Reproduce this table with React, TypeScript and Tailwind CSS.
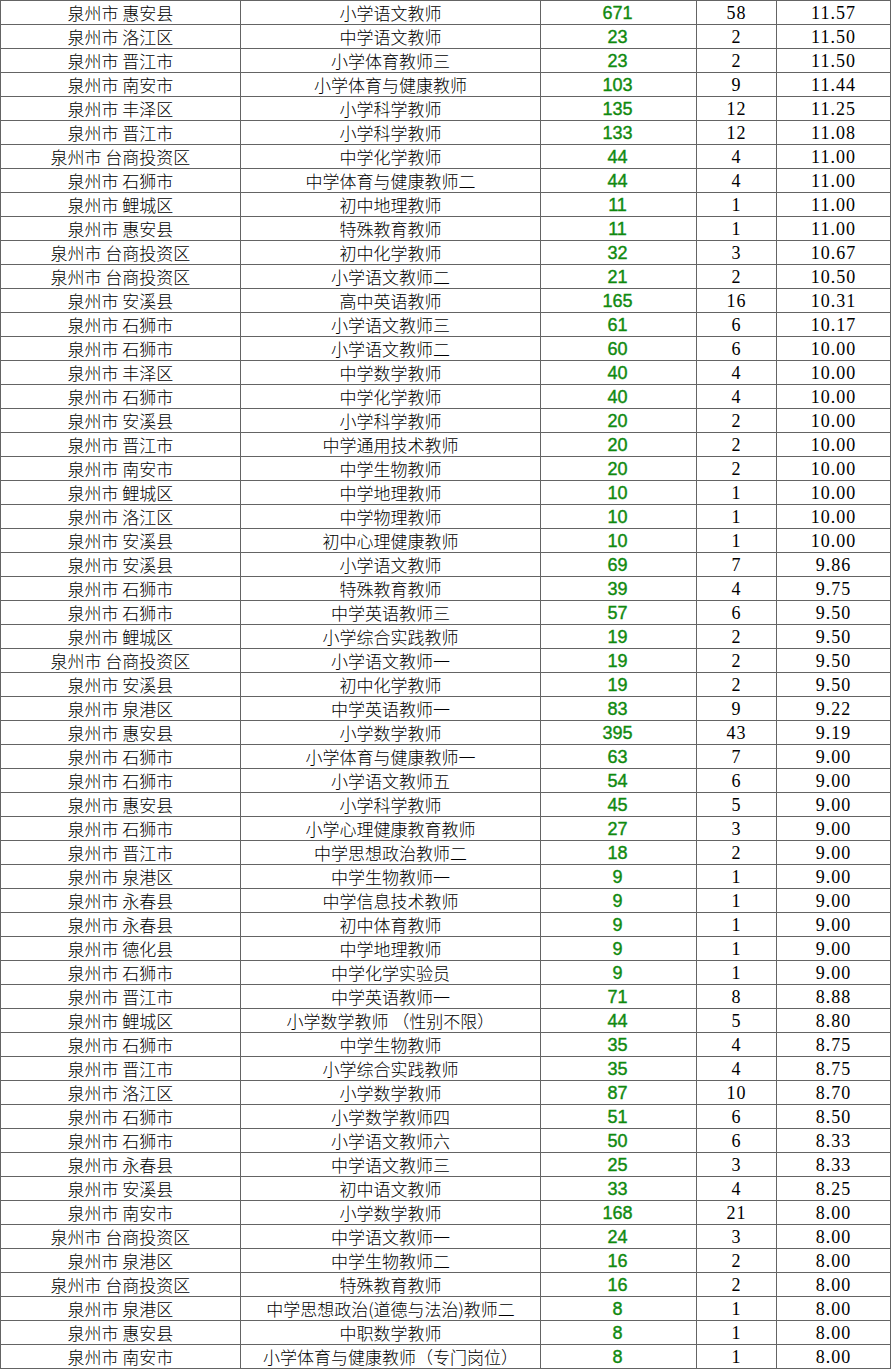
import * as React from "react"

type Row = [string, string, number, number, string]

const rows: Row[] = [
  ["泉州市 惠安县", "小学语文教师", 671, 58, "11.57"],
  ["泉州市 洛江区", "中学语文教师", 23, 2, "11.50"],
  ["泉州市 晋江市", "小学体育教师三", 23, 2, "11.50"],
  ["泉州市 南安市", "小学体育与健康教师", 103, 9, "11.44"],
  ["泉州市 丰泽区", "小学科学教师", 135, 12, "11.25"],
  ["泉州市 晋江市", "小学科学教师", 133, 12, "11.08"],
  ["泉州市 台商投资区", "中学化学教师", 44, 4, "11.00"],
  ["泉州市 石狮市", "中学体育与健康教师二", 44, 4, "11.00"],
  ["泉州市 鲤城区", "初中地理教师", 11, 1, "11.00"],
  ["泉州市 惠安县", "特殊教育教师", 11, 1, "11.00"],
  ["泉州市 台商投资区", "初中化学教师", 32, 3, "10.67"],
  ["泉州市 台商投资区", "小学语文教师二", 21, 2, "10.50"],
  ["泉州市 安溪县", "高中英语教师", 165, 16, "10.31"],
  ["泉州市 石狮市", "小学语文教师三", 61, 6, "10.17"],
  ["泉州市 石狮市", "小学语文教师二", 60, 6, "10.00"],
  ["泉州市 丰泽区", "中学数学教师", 40, 4, "10.00"],
  ["泉州市 石狮市", "中学化学教师", 40, 4, "10.00"],
  ["泉州市 安溪县", "小学科学教师", 20, 2, "10.00"],
  ["泉州市 晋江市", "中学通用技术教师", 20, 2, "10.00"],
  ["泉州市 南安市", "中学生物教师", 20, 2, "10.00"],
  ["泉州市 鲤城区", "中学地理教师", 10, 1, "10.00"],
  ["泉州市 洛江区", "中学物理教师", 10, 1, "10.00"],
  ["泉州市 安溪县", "初中心理健康教师", 10, 1, "10.00"],
  ["泉州市 安溪县", "小学语文教师", 69, 7, "9.86"],
  ["泉州市 石狮市", "特殊教育教师", 39, 4, "9.75"],
  ["泉州市 石狮市", "中学英语教师三", 57, 6, "9.50"],
  ["泉州市 鲤城区", "小学综合实践教师", 19, 2, "9.50"],
  ["泉州市 台商投资区", "小学语文教师一", 19, 2, "9.50"],
  ["泉州市 安溪县", "初中化学教师", 19, 2, "9.50"],
  ["泉州市 泉港区", "中学英语教师一", 83, 9, "9.22"],
  ["泉州市 惠安县", "小学数学教师", 395, 43, "9.19"],
  ["泉州市 石狮市", "小学体育与健康教师一", 63, 7, "9.00"],
  ["泉州市 石狮市", "小学语文教师五", 54, 6, "9.00"],
  ["泉州市 惠安县", "小学科学教师", 45, 5, "9.00"],
  ["泉州市 石狮市", "小学心理健康教育教师", 27, 3, "9.00"],
  ["泉州市 晋江市", "中学思想政治教师二", 18, 2, "9.00"],
  ["泉州市 泉港区", "中学生物教师一", 9, 1, "9.00"],
  ["泉州市 永春县", "中学信息技术教师", 9, 1, "9.00"],
  ["泉州市 永春县", "初中体育教师", 9, 1, "9.00"],
  ["泉州市 德化县", "中学地理教师", 9, 1, "9.00"],
  ["泉州市 石狮市", "中学化学实验员", 9, 1, "9.00"],
  ["泉州市 晋江市", "中学英语教师一", 71, 8, "8.88"],
  ["泉州市 鲤城区", "小学数学教师 （性别不限）", 44, 5, "8.80"],
  ["泉州市 石狮市", "中学生物教师", 35, 4, "8.75"],
  ["泉州市 晋江市", "小学综合实践教师", 35, 4, "8.75"],
  ["泉州市 洛江区", "小学数学教师", 87, 10, "8.70"],
  ["泉州市 石狮市", "小学数学教师四", 51, 6, "8.50"],
  ["泉州市 石狮市", "小学语文教师六", 50, 6, "8.33"],
  ["泉州市 永春县", "中学语文教师三", 25, 3, "8.33"],
  ["泉州市 安溪县", "初中语文教师", 33, 4, "8.25"],
  ["泉州市 南安市", "小学数学教师", 168, 21, "8.00"],
  ["泉州市 台商投资区", "中学语文教师一", 24, 3, "8.00"],
  ["泉州市 泉港区", "中学生物教师二", 16, 2, "8.00"],
  ["泉州市 台商投资区", "特殊教育教师", 16, 2, "8.00"],
  ["泉州市 泉港区", "中学思想政治(道德与法治)教师二", 8, 1, "8.00"],
  ["泉州市 惠安县", "中职数学教师", 8, 1, "8.00"],
  ["泉州市 南安市", "小学体育与健康教师（专门岗位）", 8, 1, "8.00"],
]

const cjk = "font-['Noto_Sans_CJK_SC',sans-serif] text-[17px] font-light text-black"
const serif =
  "font-['Liberation_Serif','Noto_Sans_CJK_SC',serif] text-[18px] tracking-[1px] text-black"
const cell =
  "flex h-6 items-center justify-center border-r border-b border-[#646464] whitespace-nowrap leading-none"

export default function App() {
  return (
    <div className="w-[891px] bg-white">
      <div className="grid grid-cols-[240px_300px_156px_80px_114px] border-t border-l border-[#646464]">
        {rows.map(([area, post, applicants, quota, ratio], i) => (
          <React.Fragment key={i}>
            <div className={`${cell} ${cjk}`}>{area}</div>
            <div className={`${cell} ${cjk}`}>{post}</div>
            <div className={`${cell} font-['Liberation_Sans',sans-serif] text-[18px] text-[#108a10]`}>
              <span className="pr-[2px] [-webkit-text-stroke:0.4px_#108a10]">{applicants}</span>
            </div>
            <div className={`${cell} ${serif}`}>{quota}</div>
            <div className={`${cell} ${serif}`}>{ratio}</div>
          </React.Fragment>
        ))}
      </div>
    </div>
  )
}
